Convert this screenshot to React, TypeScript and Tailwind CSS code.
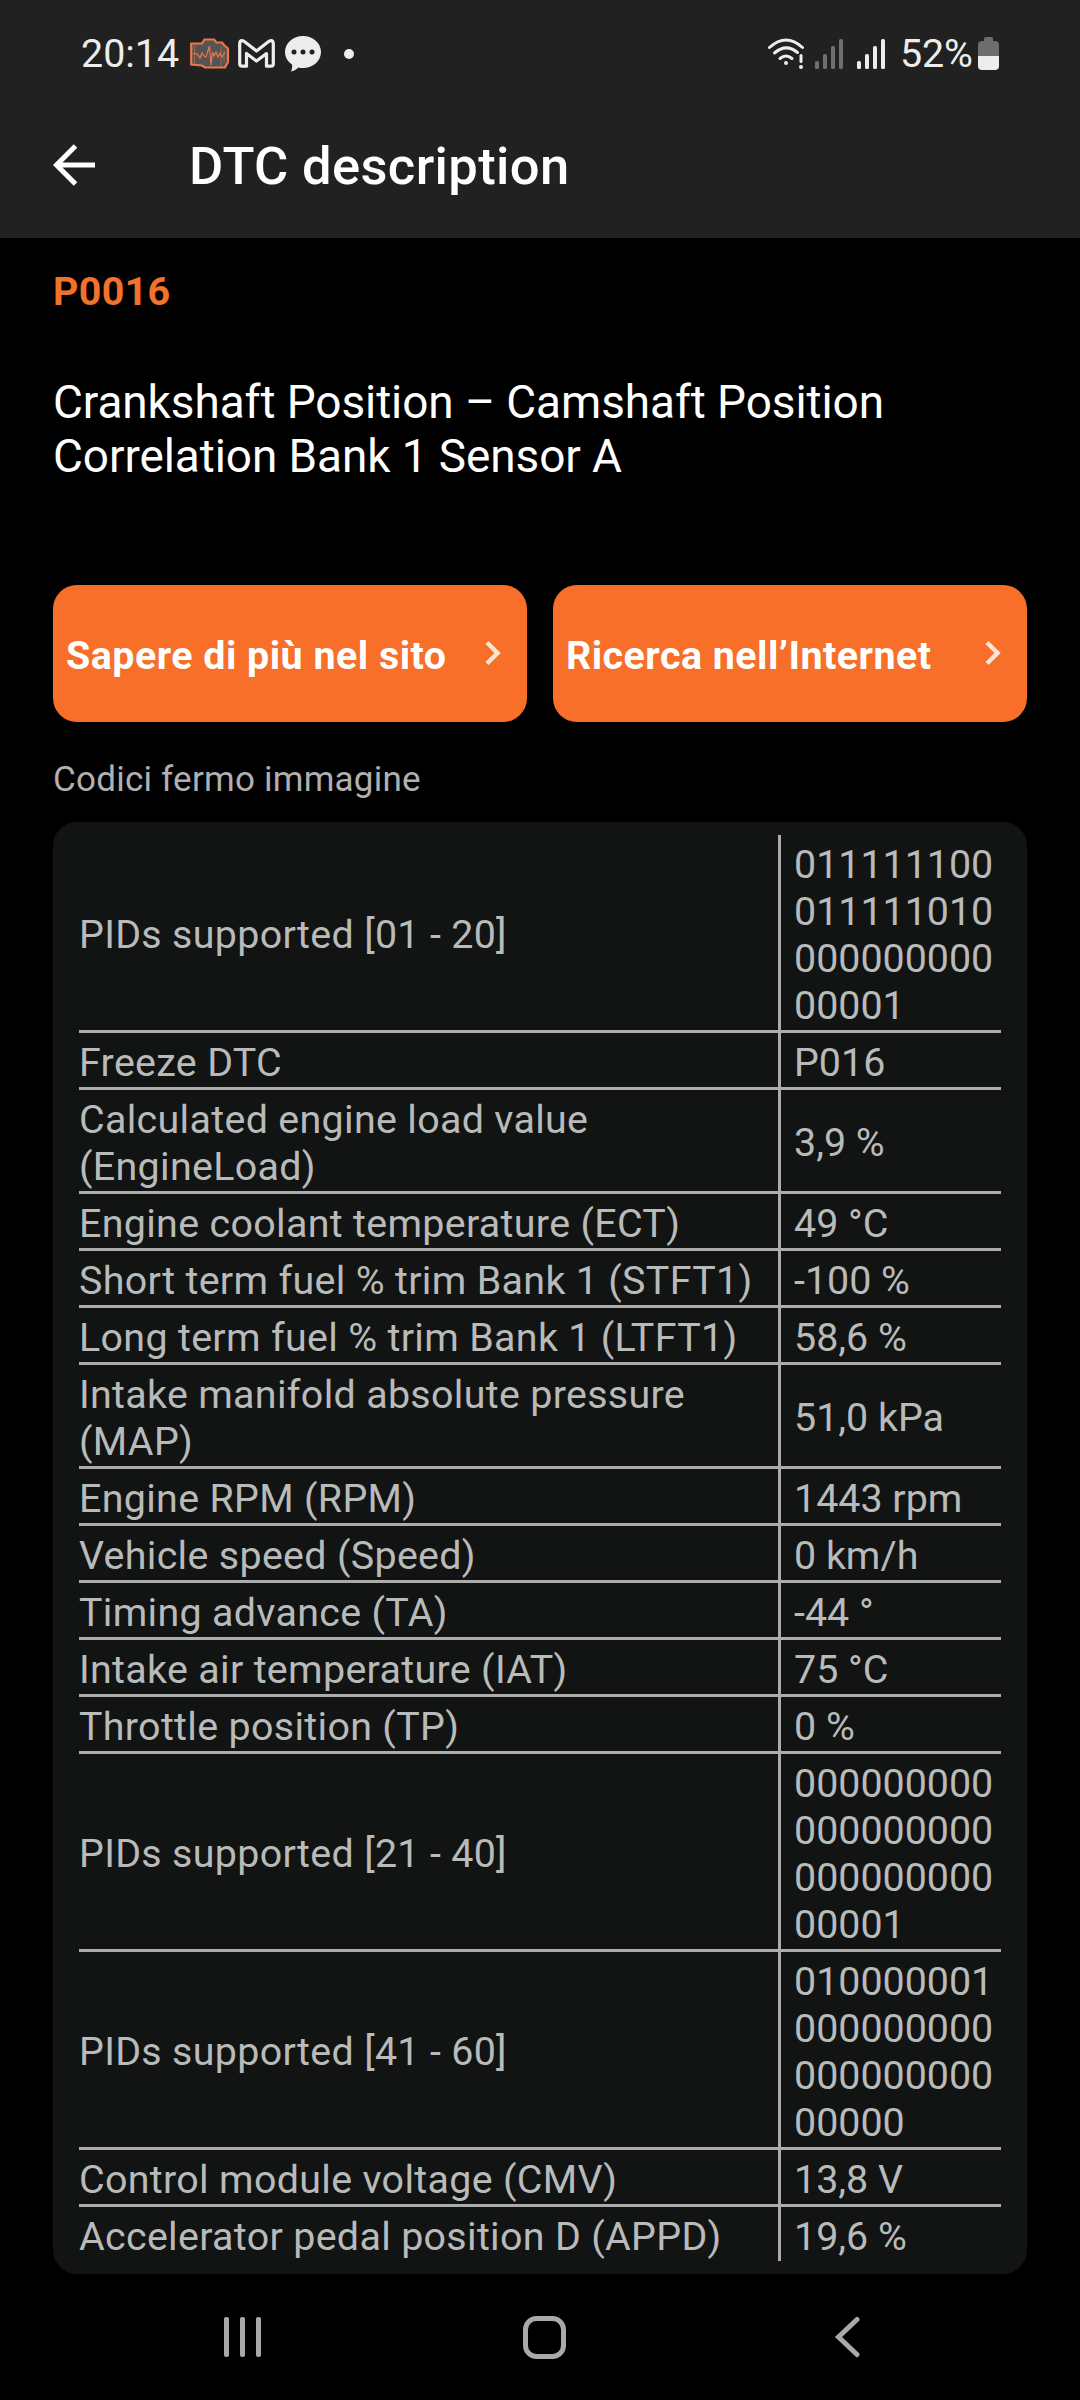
const rows: [string[], string[]][] = [
  [["PIDs supported [01 - 20]"], ["011111100", "011111010", "000000000", "00001"]],
  [["Freeze DTC"], ["P016"]],
  [["Calculated engine load value", "(EngineLoad)"], ["3,9 %"]],
  [["Engine coolant temperature (ECT)"], ["49 °C"]],
  [["Short term fuel % trim Bank 1 (STFT1)"], ["-100 %"]],
  [["Long term fuel % trim Bank 1 (LTFT1)"], ["58,6 %"]],
  [["Intake manifold absolute pressure", "(MAP)"], ["51,0 kPa"]],
  [["Engine RPM (RPM)"], ["1443 rpm"]],
  [["Vehicle speed (Speed)"], ["0 km/h"]],
  [["Timing advance (TA)"], ["-44 °"]],
  [["Intake air temperature (IAT)"], ["75 °C"]],
  [["Throttle position (TP)"], ["0 %"]],
  [["PIDs supported [21 - 40]"], ["000000000", "000000000", "000000000", "00001"]],
  [["PIDs supported [41 - 60]"], ["010000001", "000000000", "000000000", "00000"]],
  [["Control module voltage (CMV)"], ["13,8 V"]],
  [["Accelerator pedal position D (APPD)"], ["19,6 %"]],
];

function Lines({ lines, raised }: { lines: string[]; raised: boolean }) {
  return (
    <div className={raised ? "mb-[2px]" : ""}>
      {lines.map((line, i) => (
        <div key={i}>{line}</div>
      ))}
    </div>
  );
}

function EngineIcon() {
  return (
    <svg className="ml-[12px] h-[32px] w-[40px] shrink-0" viewBox="0 0 40 32" fill="none">
      <path
        d="M1.200 5.500H12L14.500 1.500H24L26.500 4.500H32L34 7L38 10.500V24L35 29.500H15L12 27.500L1.200 26.500Z"
        fill="#555454"
        stroke="#e8794a"
        strokeWidth="2.200"
      />
      <path d="M4.500 6V26M31 8V28M34 12V24" stroke="#a8623f" strokeWidth="1" />
      <path
        d="M3 15.500H6L8 17L10 20L12 15L14 18L16 19L19.500 8L21 27L22.500 14L24 18L26 14L28 19L30 15L32 19L35 14"
        stroke="#e8794a"
        strokeWidth="1.200"
      />
    </svg>
  );
}

function SignalIcon({ color }: { color: string }) {
  return (
    <svg className="h-[30px] w-[28px] shrink-0" viewBox="0 0 28 30" fill={color}>
      <rect x="0" y="22" width="4" height="8" rx="1.500" />
      <rect x="8" y="15" width="4" height="15" rx="1.500" />
      <rect x="16" y="7" width="4" height="23" rx="1.500" />
      <rect x="24" y="0" width="4" height="30" rx="1.500" />
    </svg>
  );
}

function StatusBar() {
  return (
    <div className="flex h-[107px] items-center justify-between pr-[81px] pl-[81px] text-[#ededed]">
      <div className="flex items-center">
        <span className="w-[97px] text-[39.4px] leading-[46px] whitespace-nowrap">20:14</span>
        <EngineIcon />
        <svg className="ml-[8px] h-[29px] w-[37px] shrink-0" viewBox="0 0 37 29" fill="none">
          <path
            d="M1.700 5Q1.700 1.700 4 1.700Q5.500 1.700 7 3L18.500 12L30 3Q31.500 1.700 33 1.700Q35.300 1.700 35.300 5V25Q35.300 27.200 33 27.200H28.500V14.500L18.500 22L8.500 14.500V27.200H4Q1.700 27.200 1.700 25Z"
            stroke="#ededed"
            strokeWidth="3.200"
            strokeLinejoin="round"
          />
        </svg>
        <svg className="ml-[9px] h-[36px] w-[38px] shrink-0" viewBox="0 0 38 36">
          <path d="M19 0C29 0 37 7 37 16S29 32 19 32C17 32 16 32 14.500 31.500C12 34 9.500 35 7 35.500C8 33 8.500 31 8 28.500C3.500 25.500 1 21 1 16C1 7 9 0 19 0Z" fill="#ededed" />
          <circle cx="10" cy="16" r="2.500" fill="#212121" />
          <circle cx="19" cy="16" r="2.500" fill="#212121" />
          <circle cx="28" cy="16" r="2.500" fill="#212121" />
        </svg>
        <div className="ml-[22px] size-[10px] rounded-full bg-[#ededed]" />
      </div>
      <div className="flex items-center">
        <svg className="mr-[10px] h-[32px] w-[37px] shrink-0" viewBox="0 0 37 32" fill="none" stroke="#ededed" strokeWidth="3" strokeLinecap="round">
          <path d="M1.500 9.500Q18 -5.500 34.500 9.500" />
          <path d="M6.500 15Q18 5 29.500 14.500" />
          <path d="M12 20.500Q18 15.500 24 20.500" />
          <circle cx="18" cy="25" r="2" fill="#ededed" stroke="none" />
          <path d="M33 17.500V23.500" />
          <circle cx="33" cy="29" r="2" fill="#ededed" stroke="none" />
        </svg>
        <SignalIcon color="#6f6f6f" />
        <div className="w-[14px]" />
        <SignalIcon color="#ededed" />
        <span className="ml-[15px] w-[71px] text-[39.4px] leading-[46px] tracking-[-0.2px] whitespace-nowrap">52%</span>
        <svg className="ml-[7px] h-[33px] w-[21px] shrink-0" viewBox="0 0 21 33">
          <path d="M6 2Q6 0 8 0H13Q15 0 15 2V4H17Q21 4 21 8V19H0V8Q0 4 4 4H6Z" fill="#6d6d6d" />
          <path d="M0 19H21V29Q21 33 17 33H4Q0 33 0 29Z" fill="#ededed" />
        </svg>
      </div>
    </div>
  );
}

function ActionButton({ label }: { label: string }) {
  return (
    <button className="flex h-[137px] w-[474px] items-center justify-between rounded-[24px] bg-[#f76f28] pr-[25px] pl-[13px] text-left font-bold text-white">
      <span className="pt-[5px] text-[39.4px] leading-[46px] tracking-[0.48px] whitespace-nowrap">{label}</span>
      <svg className="mb-px h-[26px] w-[18px]" viewBox="0 0 18 26" fill="none" stroke="#fde3d5" strokeWidth="4.500">
        <path d="M3 2.500L13.500 13L3 23.500" />
      </svg>
    </button>
  );
}

export default function App() {
  return (
    <div className="flex h-[2400px] w-[1080px] flex-col overflow-hidden bg-black font-[Roboto,sans-serif] text-white">
      <header className="h-[238px] bg-[#212121]">
        <StatusBar />
        <div className="flex h-[118px] items-center pl-[53px]">
          <svg className="mb-[3px] h-[42px] w-[42px]" viewBox="0 0 42 42" fill="none" stroke="#fff" strokeWidth="5">
            <path d="M42 21H4M22.500 2L3.500 21L22.500 40" />
          </svg>
          <h1 className="ml-[94px] text-[52.5px] leading-[62px] font-medium tracking-[0.36px] whitespace-nowrap">DTC description</h1>
        </div>
      </header>

      <main className="px-[53px]">
        <div className="mt-[30px] text-[39.4px] leading-[47px] font-bold tracking-[0.35px] text-[#f2712c]">P0016</div>
        <div className="mt-[60px] text-[45.9px] leading-[54px] tracking-[-0.06px] whitespace-nowrap">
          <div>Crankshaft Position – Camshaft Position</div>
          <div>Correlation Bank 1 Sensor A</div>
        </div>
        <div className="mt-[102px] flex justify-between">
          <ActionButton label="Sapere di più nel sito" />
          <ActionButton label="Ricerca nell’Internet" />
        </div>
        <div className="mt-[37px] text-[35px] leading-[41px] tracking-[0.23px] text-[#b0b0b0]">Codici fermo immagine</div>
        <div className="mt-[22px] rounded-[24px] bg-[#121413] px-[26px] py-[13px] text-[39.4px] leading-[47px] whitespace-nowrap text-[#b9bbba]">
          {rows.map(([label, value], i) => (
            <div key={i} className="flex border-b-3 border-[#acacac] last:border-b-0">
              <div className="flex w-[699px] items-center pt-[6px] pb-px tracking-[0.32px]">
                <Lines lines={label} raised={label.length < value.length} />
              </div>
              <div className="flex flex-1 items-center border-l-3 border-[#acacac] pt-[6px] pb-px pl-[13px]">
                <Lines lines={value} raised={value.length < label.length} />
              </div>
            </div>
          ))}
        </div>
      </main>

      <nav className="mt-auto flex h-[126px] items-center pl-[224px]">
        <svg className="h-[42px] w-[38px]" viewBox="0 0 38 42" fill="#a9a9a9">
          <rect x="0" y="1" width="5" height="40" rx="2" />
          <rect x="16" y="1" width="5" height="40" rx="2" />
          <rect x="32" y="1" width="5" height="40" rx="2" />
        </svg>
        <svg className="ml-[261px] h-[43px] w-[43px]" viewBox="0 0 43 43" fill="none" stroke="#a9a9a9" strokeWidth="5">
          <rect x="2.500" y="2.500" width="38" height="38" rx="11" />
        </svg>
        <svg className="ml-[267px] h-[42px] w-[27px]" viewBox="0 0 27 42" fill="none" stroke="#a9a9a9" strokeWidth="5" strokeLinecap="round">
          <path d="M24 3.500L5.500 21L24 38.500" />
        </svg>
      </nav>
    </div>
  );
}
